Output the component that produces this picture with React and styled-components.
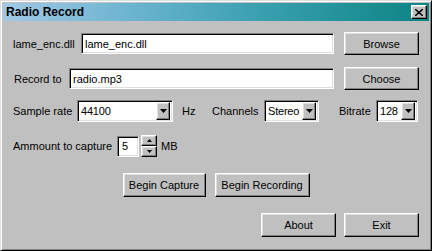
import React from 'react';
import styled, { createGlobalStyle } from 'styled-components';

const GlobalStyle = createGlobalStyle`
  html, body { margin: 0; padding: 0; background: #c0c0c0; }
  body { font-family: "Liberation Sans", Arial, sans-serif; font-size: 11px; color: #000; }
`;

const Window = styled.div`
  width: 432px;
  height: 251px;
  box-sizing: border-box;
  background: #c0c0c0;
  border: 1px solid;
  border-color: #dfdfdf #000 #000 #dfdfdf;
  box-shadow: inset 1px 1px #fff, inset -1px -1px #808080;
  padding: 2px;
  display: flex;
  flex-direction: column;
`;

const TitleBar = styled.div`
  height: 18px;
  flex: none;
  display: flex;
  align-items: center;
  justify-content: space-between;
  padding: 0 2px 0 3px;
  background: linear-gradient(to right, #a2c8e4 0%, #6cb4d0 30%, #3aa0b0 60%, #0c8484 100%);
`;

const Title = styled.span`
  font-weight: bold;
  font-size: 12px;
  color: #000;
`;

const raised = `
  background: #c0c0c0;
  border: 1px solid;
  border-color: #fff #000 #000 #fff;
  box-shadow: inset -1px -1px #808080, inset 1px 1px #dfdfdf;
  box-sizing: border-box;
`;

const sunken = `
  background: #fff;
  border: 1px solid;
  border-color: #808080 #fff #fff #808080;
  box-shadow: inset 1px 1px #000, inset -1px -1px #dfdfdf;
  box-sizing: border-box;
`;

const CloseButton = styled.div`
  ${raised}
  width: 16px;
  height: 14px;
  display: flex;
  align-items: center;
  justify-content: center;
`;

const Body = styled.div`
  display: flex;
  flex-direction: column;
  padding: 0 10px 0 10px;
`;

const Row = styled.div`
  display: flex;
  align-items: center;
  height: ${p => p.$h}px;
  margin-top: ${p => p.$mt}px;
  justify-content: ${p => p.$justify || 'flex-start'};
  gap: ${p => p.$gap || 0}px;
`;

const Label = styled.span`
  flex: none;
  width: ${p => (p.$w ? `${p.$w}px` : 'auto')};
  margin-left: ${p => p.$ml || 0}px;
  white-space: nowrap;
`;

const TextBox = styled.div`
  ${sunken}
  flex: 1;
  height: 21px;
  padding: 0 3px;
  display: flex;
  align-items: center;
  margin-right: 10px;
`;

const Button = styled.div`
  ${raised}
  flex: none;
  width: ${p => p.$w}px;
  height: ${p => p.$h || 23}px;
  display: flex;
  align-items: center;
  justify-content: center;
`;

const Combo = styled.div`
  ${sunken}
  flex: none;
  width: ${p => p.$w}px;
  height: 22px;
  padding: 2px;
  display: flex;
  align-items: center;
`;

const ComboText = styled.span`
  flex: 1;
  padding-left: 1px;
  letter-spacing: -0.2px;
  white-space: nowrap;
  overflow: hidden;
`;

const ArrowButton = styled.div`
  ${raised}
  flex: none;
  width: ${p => p.$w || 15}px;
  height: ${p => p.$h || 18}px;
  display: flex;
  align-items: center;
  justify-content: center;
`;

const SmallEdit = styled.div`
  ${sunken}
  flex: none;
  width: 22px;
  height: 21px;
  padding-left: 4px;
  display: flex;
  align-items: center;
`;

const Spinner = styled.div`
  display: flex;
  flex-direction: column;
  margin-left: 2px;
  margin-right: 4px;
`;

const Down = ({ small }) => (
  <svg width={small ? 5 : 7} height={small ? 3 : 4} viewBox={small ? '0 0 5 3' : '0 0 7 4'}>
    <polygon points={small ? '0,0 5,0 2.5,3' : '0,0 7,0 3.5,4'} fill="#000" />
  </svg>
);

const Up = () => (
  <svg width="5" height="3" viewBox="0 0 5 3">
    <polygon points="0,3 5,3 2.5,0" fill="#000" />
  </svg>
);

function Dropdown({ w, value }) {
  return (
    <Combo $w={w}>
      <ComboText>{value}</ComboText>
      <ArrowButton $w={14}>
        <Down />
      </ArrowButton>
    </Combo>
  );
}

export default function App() {
  return (
    <>
      <GlobalStyle />
      <Window>
        <TitleBar>
          <Title>Radio Record</Title>
          <CloseButton>
            <svg width="8" height="7" viewBox="0 0 8 7">
              <path d="M0 0 L8 7 M8 0 L0 7" stroke="#000" strokeWidth="1.6" />
            </svg>
          </CloseButton>
        </TitleBar>
        <Body>
          <Row $h={23} $mt={11}>
            <Label $w={68}>lame_enc.dll</Label>
            <TextBox>lame_enc.dll</TextBox>
            <Button $w={75}>Browse</Button>
          </Row>
          <Row $h={23} $mt={12}>
            <Label $w={55} $ml={1}>Record to</Label>
            <TextBox>radio.mp3</TextBox>
            <Button $w={75}>Choose</Button>
          </Row>
          <Row $h={22} $mt={10}>
            <Label $w={64}>Sample rate</Label>
            <Dropdown w={96} value="44100" />
            <Label $w={30} $ml={9}>Hz</Label>
            <Label $w={52}>Channels</Label>
            <Dropdown w={55} value="Stereo" />
            <Label $w={37} $ml={20}>Bitrate</Label>
            <Dropdown w={42} value="128" />
          </Row>
          <Row $h={22} $mt={13}>
            <Label $w={104}>Ammount to capture</Label>
            <SmallEdit>5</SmallEdit>
            <Spinner>
              <ArrowButton $w={16} $h={11}><Up /></ArrowButton>
              <ArrowButton $w={16} $h={11}><Down small /></ArrowButton>
            </Spinner>
            <Label>MB</Label>
          </Row>
          <Row $h={24} $mt={16} $justify="center" $gap={9}>
            <Button $w={83} $h={24}>Begin Capture</Button>
            <Button $w={95} $h={24}>Begin Recording</Button>
          </Row>
          <Row $h={24} $mt={16} $justify="flex-end" $gap={8}>
            <Button $w={75} $h={24}>About</Button>
            <Button $w={75} $h={24}>Exit</Button>
          </Row>
        </Body>
      </Window>
    </>
  );
}
